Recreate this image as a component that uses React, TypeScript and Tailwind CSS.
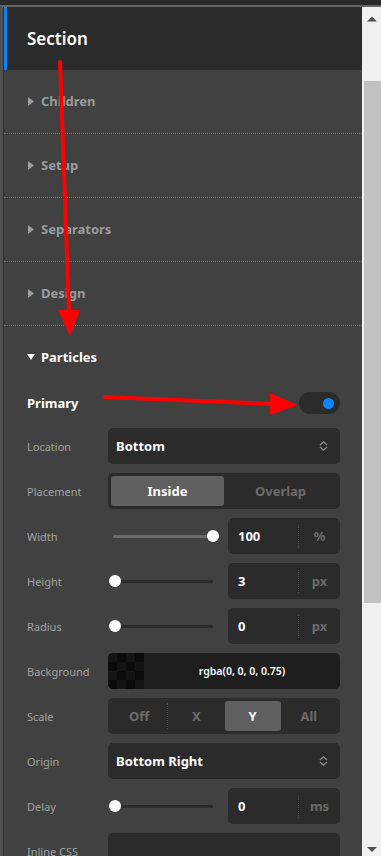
import React from "react";

function Collapsed({ title }: { title: string }) {
  return (
    <div className="h-[64px] shrink-0 border-b border-dotted border-[#727272] flex items-center pl-[24px]">
      <svg width="6" height="9" viewBox="0 0 6 9" className="mr-[7px] shrink-0">
        <path d="M0 0 L6 4.5 L0 9Z" fill="#9c9c9c" />
      </svg>
      <span className="text-[13px] font-bold text-[#9c9c9c] leading-none">{title}</span>
    </div>
  );
}

function Row({ label, children }: { label: string; children?: React.ReactNode }) {
  return (
    <div className="flex h-[36px] items-center shrink-0">
      <div className="w-[81px] text-[11px] text-[#a3a3a3] leading-none">{label}</div>
      <div className="flex-1 h-full flex gap-[10px]">{children}</div>
    </div>
  );
}

function Select({ value }: { value: string }) {
  return (
    <div className="flex-1 h-full bg-[#2b2b2b] rounded-[5px] flex items-center pl-[8px] pr-[12px]">
      <span className="flex-1 text-[13px] font-bold text-white leading-none">{value}</span>
      <svg width="9" height="10" viewBox="0 0 9 10">
        <polyline points="1,4 4.5,0.8 8,4" fill="none" stroke="#8a8a8a" strokeWidth="1.3" />
        <polyline points="1,6 4.5,9.2 8,6" fill="none" stroke="#8a8a8a" strokeWidth="1.3" />
      </svg>
    </div>
  );
}

function Segmented({ options, active, sepAfter }: { options: string[]; active: number; sepAfter?: number[] }) {
  return (
    <div className="flex-1 h-full bg-[#2b2b2b] rounded-[5px] p-[3px] flex">
      {options.map((o, i) => (
        <React.Fragment key={o}>
          <div
            className={
              i === active
                ? "flex-1 flex items-center justify-center rounded-[3px] text-[13px] font-bold leading-none bg-[#606060] text-white"
                : "flex-1 flex items-center justify-center rounded-[3px] text-[13px] font-bold leading-none text-[#6b6b6b]"
            }
          >
            {o}
          </div>
          {sepAfter && sepAfter.includes(i) ? (
            <div className="w-0 my-[2px] border-l border-dotted border-[#4a4a4a]" />
          ) : null}
        </React.Fragment>
      ))}
    </div>
  );
}

function Slider({ pct, filled }: { pct: number; filled: boolean }) {
  return (
    <div className="w-[110px] h-full relative flex items-center">
      <div className="absolute left-[5px] right-[5px] h-[3px] rounded-full bg-[#2b2b2b]" />
      {filled ? (
        <div className="absolute left-[5px] h-[3px] rounded-full bg-[#6b6b6b]" style={{ width: pct + "px" }} />
      ) : null}
      <div
        className="absolute w-[12px] h-[12px] rounded-full bg-white"
        style={{ left: 0.5 + pct * 0.98 + "px" }}
      />
    </div>
  );
}

function NumInput({ value, unit }: { value: string; unit: string }) {
  return (
    <div className="w-[112px] h-full bg-[#2b2b2b] rounded-[5px] flex items-center">
      <span className="flex-1 pl-[10px] text-[13px] font-bold text-white leading-none">{value}</span>
      <div className="h-[23px] border-l border-dotted border-[#4c4c4c]" />
      <span className="w-[41px] text-center text-[13px] font-bold text-[#6b6b6b] leading-none">{unit}</span>
    </div>
  );
}

function ColorInput() {
  const cells = Array.from({ length: 16 });
  return (
    <div className="flex-1 h-full bg-[#1e1e1e] rounded-[5px] flex overflow-hidden">
      <div className="w-[36px] h-full grid grid-cols-4 grid-rows-4 shrink-0">
        {cells.map((_, i) => {
          const r = Math.floor(i / 4);
          const c = i % 4;
          return (
            <div key={i} className={(r + c) % 2 === 0 ? "bg-[#141414]" : "bg-[#0b0b0b]"} />
          );
        })}
      </div>
      <div className="flex-1 flex items-center justify-center text-[10.5px] font-semibold text-white leading-none">
        rgba(0, 0, 0, 0.75)
      </div>
    </div>
  );
}

export default function App() {
  return (
    <div className="w-[381px] h-[856px] relative overflow-hidden bg-[#2b2b2b] font-['Noto_Sans','Open_Sans',sans-serif] flex flex-col">
      <div className="h-[5px] bg-[#2a2a2a] shrink-0" />
      <div className="h-[2px] bg-[#646464] shrink-0" />
      <div className="flex-1 flex min-h-0">
        <div className="w-[3px] bg-[#515151] shrink-0" />
        <div className="w-[1px] bg-[#2e2e2e] shrink-0" />
        <div className="w-[358px] bg-[#414141] flex flex-col shrink-0 overflow-hidden">
          <div className="h-[63px] bg-[#2b2b2b] flex items-center shrink-0">
            <div className="w-[3px] self-stretch bg-[#0d84f0]" />
            <span className="pl-[20px] text-[17px] font-semibold text-white leading-none">Section</span>
          </div>
          <Collapsed title="Children" />
          <Collapsed title="Setup" />
          <Collapsed title="Separators" />
          <Collapsed title="Design" />
          <div className="h-[62px] flex items-center pl-[23px] shrink-0">
            <svg width="8" height="6" viewBox="0 0 8 6" className="mr-[6px]">
              <path d="M0 0 L8 0 L4 6Z" fill="#ffffff" />
            </svg>
            <span className="text-[13px] font-bold text-white leading-none">Particles</span>
          </div>
          <div className="h-[22px] mt-[4px] flex items-center justify-between pl-[23px] pr-[22px] shrink-0">
            <span className="text-[13px] font-bold text-white leading-none">Primary</span>
            <div className="w-[41px] h-[22px] rounded-full bg-[#2b2b2b] flex items-center justify-end pr-[6px]">
              <div className="w-[11px] h-[11px] rounded-full bg-[#0a84ff]" />
            </div>
          </div>
          <div className="mt-[14px] flex flex-col gap-[9px] pl-[23px] pr-[22px] shrink-0">
            <Row label="Location">
              <Select value="Bottom" />
            </Row>
            <Row label="Placement">
              <Segmented options={["Inside", "Overlap"]} active={0} />
            </Row>
            <Row label="Width">
              <Slider pct={100} filled={true} />
              <NumInput value="100" unit="%" />
            </Row>
            <Row label="Height">
              <Slider pct={0} filled={false} />
              <NumInput value="3" unit="px" />
            </Row>
            <Row label="Radius">
              <Slider pct={0} filled={false} />
              <NumInput value="0" unit="px" />
            </Row>
            <Row label="Background">
              <ColorInput />
            </Row>
            <Row label="Scale">
              <Segmented options={["Off", "X", "Y", "All"]} active={2} sepAfter={[0]} />
            </Row>
            <Row label="Origin">
              <Select value="Bottom Right" />
            </Row>
            <Row label="Delay">
              <Slider pct={0} filled={false} />
              <NumInput value="0" unit="ms" />
            </Row>
            <Row label="Inline CSS">
              <div className="flex-1 h-full bg-[#2b2b2b] rounded-[5px]" />
            </Row>
          </div>
        </div>
        <div className="w-[19px] bg-[#f0f0f0] flex flex-col shrink-0">
          <div className="h-[74px] flex justify-center pt-[9px] shrink-0">
            <svg width="10" height="6" viewBox="0 0 10 6">
              <path d="M0 5.5 L5 0.5 L10 5.5Z" fill="#505050" />
            </svg>
          </div>
          <div className="h-[522px] ml-[2px] bg-[#c1c1c1] shrink-0" />
          <div className="flex-1" />
          <div className="flex justify-center pb-[4px]">
            <svg width="10" height="5" viewBox="0 0 10 5">
              <path d="M0 0 L10 0 L5 5Z" fill="#505050" />
            </svg>
          </div>
        </div>
      </div>
      <svg className="absolute inset-0 pointer-events-none" width="381" height="856" viewBox="0 0 381 856">
        <line x1="60" y1="62" x2="69" y2="312" stroke="#ff0000" strokeWidth="4" strokeLinecap="round" />
        <polygon points="58,310 80,310 70,336" fill="#ff0000" />
        <line x1="105" y1="397" x2="272" y2="404" stroke="#ff0000" strokeWidth="4" strokeLinecap="round" />
        <polygon points="270,393 270,415 298,405" fill="#ff0000" />
      </svg>
    </div>
  );
}
